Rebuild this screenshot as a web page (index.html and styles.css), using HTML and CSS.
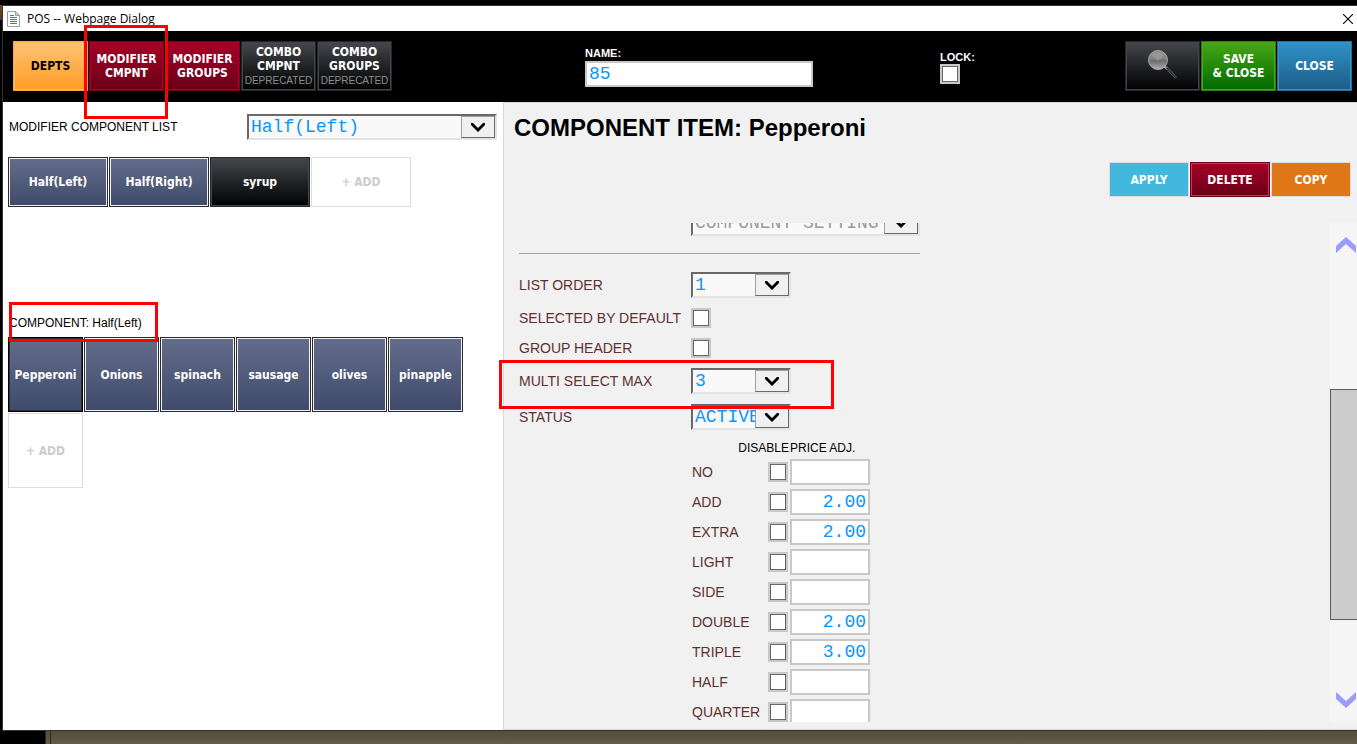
FILE: index.html
```html
<!DOCTYPE html>
<html lang="en">
<head>
    <meta charset="UTF-8">
    <title>POS -- Webpage Dialog</title>
    <link rel="stylesheet" href="styles.css">
</head>
<body>

<div class="dialog">
    <div class="titlebar">
        <svg class="doc-icon" width="13" height="16" viewBox="0 0 13 16">
            <path d="M.5.5h8l4 4v11H.5z" fill="#fff" stroke="#9a9fa3"/>
            <path d="M8.500 .5v4h4z" fill="#d5d8da" stroke="#9a9fa3"/>
            <path d="M3 4.500h4M3 6.500h7M3 8.500h7M3 10.500h7M3 12.500h7" stroke="#3a7ab8"/>
        </svg>
        <span>POS -- Webpage Dialog</span>
        <button class="close-x" aria-label="Close dialog">
            <svg width="10" height="10" viewBox="0 0 10 10"><path d="M0 0l10 10M10 0L0 10" stroke="#000" stroke-width="1.1"/></svg>
        </button>
    </div>

    <header class="toolbar">
        <nav class="btn-row">
            <button class="btn nav-btn orange">DEPTS</button>
            <button class="btn nav-btn red">MODIFIER<br>CMPNT</button>
            <button class="btn nav-btn red">MODIFIER<br>GROUPS</button>
            <button class="btn nav-btn dark">COMBO<br>CMPNT<br><span class="note">DEPRECATED</span></button>
            <button class="btn nav-btn dark">COMBO<br>GROUPS<br><span class="note">DEPRECATED</span></button>
        </nav>
        <div class="name-field">
            <label for="name">NAME:</label>
            <input type="text" id="name" class="text-input" value="85">
        </div>
        <div class="toolbar-end">
            <div class="lock-field">
                <label for="lock">LOCK:</label>
                <input type="checkbox" id="lock" class="check">
            </div>
            <div class="btn-row">
                <button class="btn nav-btn dark" aria-label="Search">
                    <svg width="32" height="32" viewBox="0 0 32 32">
                        <defs>
                            <linearGradient id="glass" x1="0" y1="0" x2="0" y2="1">
                                <stop offset="0" stop-color="#8a8a8a"/>
                                <stop offset=".4" stop-color="#858585"/>
                                <stop offset=".55" stop-color="#6c6c6c"/>
                                <stop offset="1" stop-color="#b0b0b0"/>
                            </linearGradient>
                        </defs>
                        <path d="M17 17l3 3" stroke="#b8b8b8" stroke-width="2"/>
                        <path d="M19 18l10 11" stroke="#777" stroke-width="2.600"/>
                        <path d="M20 19l9 10" stroke="#2a2426" stroke-width="1.200"/>
                        <circle cx="11" cy="11" r="9.500" fill="url(#glass)" stroke="#a8a8a8"/>
                        <path d="M4 6q7-6 14 0l-7 6z" fill="#a5a5a5" opacity=".5"/>
                    </svg>
                </button>
                <button class="btn nav-btn green">SAVE<br>&amp; CLOSE</button>
                <button class="btn nav-btn blue">CLOSE</button>
            </div>
        </div>
    </header>

    <main class="panels">
        <section class="list-panel">
            <div class="list-head">
                <label for="modList">MODIFIER COMPONENT LIST</label>
                <div class="dropdown wide">
                    <select id="modList">
                        <option>Half(Left)</option>
                        <option>Half(Right)</option>
                        <option>syrup</option>
                    </select>
                    <span class="arrow"><svg width="14" height="9" viewBox="0 0 14 9"><path d="M0 0h2l5 5 5-5h2v2L7 9 0 2z"/></svg></span>
                </div>
            </div>
            <div class="btn-row modifiers">
                <button class="btn mod-btn slate">Half(Left)</button>
                <button class="btn mod-btn slate">Half(Right)</button>
                <button class="btn mod-btn dark">syrup</button>
                <button class="btn mod-btn add">+ ADD</button>
            </div>
            <div class="component-label">COMPONENT: Half(Left)</div>
            <div class="btn-row">
                <button class="btn comp-btn slate selected">Pepperoni</button>
                <button class="btn comp-btn slate">Onions</button>
                <button class="btn comp-btn slate">spinach</button>
                <button class="btn comp-btn slate">sausage</button>
                <button class="btn comp-btn slate">olives</button>
                <button class="btn comp-btn slate">pinapple</button>
                <button class="btn comp-btn add">+ ADD</button>
            </div>
        </section>

        <section class="item-panel">
            <h1>COMPONENT ITEM: Pepperoni</h1>
            <div class="btn-row item-actions">
                <button class="btn act-btn cyan">APPLY</button>
                <button class="btn act-btn red delete">DELETE</button>
                <button class="btn act-btn copy">COPY</button>
            </div>

            <div class="scroll-area">
                <form class="settings">
                    <div class="field tall">
                        <span class="field-label"></span>
                        <div class="dropdown setting">
                            <select aria-label="Component setting" class="muted">
                                <option>COMPONENT SETTING</option>
                            </select>
                            <span class="arrow"><svg width="14" height="9" viewBox="0 0 14 9"><path d="M0 0h2l5 5 5-5h2v2L7 9 0 2z"/></svg></span>
                        </div>
                    </div>
                    <hr>
                    <div class="field tall">
                        <label class="field-label" for="listOrder">LIST ORDER</label>
                        <div class="dropdown">
                            <select id="listOrder"><option>1</option><option>2</option><option>3</option></select>
                            <span class="arrow"><svg width="14" height="9" viewBox="0 0 14 9"><path d="M0 0h2l5 5 5-5h2v2L7 9 0 2z"/></svg></span>
                        </div>
                    </div>
                    <div class="field">
                        <label class="field-label" for="byDefault">SELECTED BY DEFAULT</label>
                        <input type="checkbox" id="byDefault" class="check">
                    </div>
                    <div class="field">
                        <label class="field-label" for="groupHeader">GROUP HEADER</label>
                        <input type="checkbox" id="groupHeader" class="check">
                    </div>
                    <div class="field tall">
                        <label class="field-label" for="multiMax">MULTI SELECT MAX</label>
                        <div class="dropdown">
                            <select id="multiMax"><option>3</option><option>2</option><option>1</option></select>
                            <span class="arrow"><svg width="14" height="9" viewBox="0 0 14 9"><path d="M0 0h2l5 5 5-5h2v2L7 9 0 2z"/></svg></span>
                        </div>
                    </div>
                    <div class="field tall">
                        <label class="field-label" for="status">STATUS</label>
                        <div class="dropdown">
                            <select id="status"><option>ACTIVE</option><option>INACTIVE</option></select>
                            <span class="arrow"><svg width="14" height="9" viewBox="0 0 14 9"><path d="M0 0h2l5 5 5-5h2v2L7 9 0 2z"/></svg></span>
                        </div>
                    </div>

                    <table class="prices">
                        <thead>
                            <tr><th colspan="2" class="disable-col">DISABLE</th><th>PRICE ADJ.</th></tr>
                        </thead>
                        <tbody>
                            <tr>
                                <td><label for="pNo">NO</label></td>
                                <td><input type="checkbox" class="check" aria-label="Disable NO"></td>
                                <td><input type="text" id="pNo" class="text-input price"></td>
                            </tr>
                            <tr>
                                <td><label for="pAdd">ADD</label></td>
                                <td><input type="checkbox" class="check" aria-label="Disable ADD"></td>
                                <td><input type="text" id="pAdd" class="text-input price" value="2.00"></td>
                            </tr>
                            <tr>
                                <td><label for="pExtra">EXTRA</label></td>
                                <td><input type="checkbox" class="check" aria-label="Disable EXTRA"></td>
                                <td><input type="text" id="pExtra" class="text-input price" value="2.00"></td>
                            </tr>
                            <tr>
                                <td><label for="pLight">LIGHT</label></td>
                                <td><input type="checkbox" class="check" aria-label="Disable LIGHT"></td>
                                <td><input type="text" id="pLight" class="text-input price"></td>
                            </tr>
                            <tr>
                                <td><label for="pSide">SIDE</label></td>
                                <td><input type="checkbox" class="check" aria-label="Disable SIDE"></td>
                                <td><input type="text" id="pSide" class="text-input price"></td>
                            </tr>
                            <tr>
                                <td><label for="pDouble">DOUBLE</label></td>
                                <td><input type="checkbox" class="check" aria-label="Disable DOUBLE"></td>
                                <td><input type="text" id="pDouble" class="text-input price" value="2.00"></td>
                            </tr>
                            <tr>
                                <td><label for="pTriple">TRIPLE</label></td>
                                <td><input type="checkbox" class="check" aria-label="Disable TRIPLE"></td>
                                <td><input type="text" id="pTriple" class="text-input price" value="3.00"></td>
                            </tr>
                            <tr>
                                <td><label for="pHalf">HALF</label></td>
                                <td><input type="checkbox" class="check" aria-label="Disable HALF"></td>
                                <td><input type="text" id="pHalf" class="text-input price"></td>
                            </tr>
                            <tr>
                                <td><label for="pQuarter">QUARTER</label></td>
                                <td><input type="checkbox" class="check" aria-label="Disable QUARTER"></td>
                                <td><input type="text" id="pQuarter" class="text-input price"></td>
                            </tr>
                        </tbody>
                    </table>
                </form>

                <div class="scrollbar">
                    <button class="scroll-up" aria-label="Scroll up">
                        <svg width="20" height="16" viewBox="0 0 20 16"><path d="M0 9L10 0l10 9v7L10 7 0 16z" fill="#9c9cff"/></svg>
                    </button>
                    <div class="thumb"></div>
                    <button class="scroll-down" aria-label="Scroll down">
                        <svg width="20" height="16" viewBox="0 0 20 16"><path d="M0 7l10 9 10-9V0L10 9 0 0z" fill="#9c9cff"/></svg>
                    </button>
                </div>
            </div>
        </section>
    </main>
</div>

<div class="desktop-strip"></div>

<div class="mark mark-tab"></div>
<div class="mark mark-component"></div>
<div class="mark mark-multi"></div>

</body>
</html>
```

FILE: styles.css
```css
* {
    box-sizing: border-box;
}

body {
    margin: 0;
    height: 100vh;
    display: flex;
    flex-direction: column;
    position: relative;
    overflow: hidden;
    background: #000 linear-gradient(#6b4a1e, #5a3c16) 0 5px / 2px 15px no-repeat;
    font-family: "Liberation Sans", Arial, sans-serif;
    font-size: 12px;
    color: #000;
}

.dialog {
    flex: 1;
    min-height: 0;
    display: flex;
    flex-direction: column;
    margin: 5px 0 0 2px;
    border: 1px solid #333;
    border-right: none;
    background: #fff;
}

.desktop-strip {
    height: 13px;
    margin-left: 45px;
    border-left: 1px solid #2c281f;
    background: linear-gradient(#544d3d, #645b48);
}

.desktop-strip::before {
    content: "";
    display: block;
    width: 4px;
    height: 100%;
    border-right: 1px solid #2c281f;
}

/* title bar */
.titlebar {
    display: flex;
    align-items: center;
    height: 25px;
    padding: 0 4px;
    font-family: "Open Sans", "Segoe UI", sans-serif;
    font-size: 12px;
}

.doc-icon {
    margin-right: 7px;
}

.close-x {
    margin-left: auto;
    padding: 0;
    border: none;
    background: none;
    line-height: 0;
}

/* buttons */
.btn-row {
    display: flex;
    flex-wrap: wrap;
    gap: 1px;
}

.btn {
    padding: 0;
    border: 1px solid;
    color: #fff;
    font-family: "DejaVu Sans Condensed", Tahoma, "Noto Sans", sans-serif;
    font-size: 12px;
    font-weight: bold;
    line-height: 14px;
    cursor: pointer;
}

.nav-btn {
    width: 75px;
    height: 50px;
}

.mod-btn {
    width: 100px;
    height: 50px;
}

.comp-btn {
    width: 75px;
    height: 75px;
}

.act-btn {
    width: 80px;
    height: 35px;
}

.orange {
    color: #000;
    background: linear-gradient(#ffc277, #ff9c22);
    border-color: #f5a742;
    box-shadow: inset 0 0 0 1px #ffba63;
}

.red {
    background: linear-gradient(#a80028, #680016);
    border-color: #7d001c;
    box-shadow: inset 0 0 0 1px #a80028;
}

.dark {
    background: linear-gradient(#44474c, #000);
    border-color: #26272b;
    box-shadow: inset 0 0 0 1px #43454c;
}

.green {
    background: linear-gradient(#48a616, #006a00);
    border-color: #2f7f0c;
    box-shadow: inset 0 0 0 1px #4aa81a;
}

.blue {
    background: linear-gradient(#3092c8, #1d5c88);
    border-color: #22719d;
    box-shadow: inset 0 0 0 1px #3294ca;
}

.slate {
    background: linear-gradient(#646c8a, #3f4b6b);
    border-color: #2b2b2b;
    box-shadow: inset 0 0 0 1px #f0f0f0;
}

.slate.selected {
    border-color: #000;
    box-shadow: inset 0 0 0 1px #2c3039;
}

.add {
    color: #ccc;
    background: #fff;
    border-color: #ddd;
}

.cyan {
    background: #42b8df;
    border-color: #ddd;
}

.delete {
    border-color: #6c0018;
    box-shadow: inset 0 0 0 1px #c43a50;
}

.copy {
    background: #e07716;
    border-color: #ddd;
}

.note {
    color: #8c8c8c;
    font-family: "Liberation Sans", Arial, sans-serif;
    font-size: 10px;
    font-weight: normal;
}

/* form controls */
.text-input {
    height: 26px;
    padding: 0 2px;
    border: 2px solid #c8c8c8;
    background: #fff;
    color: #0a95ff;
    font-family: "Liberation Mono", "Courier New", monospace;
    font-size: 18px;
}

.check {
    appearance: none;
    display: block;
    width: 20px;
    height: 20px;
    margin: 0;
    border: 2px solid #c8c8c8;
    background: #fff;
    box-shadow: inset 0 0 0 1px #666;
}

.dropdown {
    display: flex;
    width: 100px;
    height: 26px;
    border: 2px solid;
    border-color: #696969 #e3e3e3 #e3e3e3 #696969;
    background: #f9f9f9;
}

.dropdown.wide {
    width: 250px;
}

.dropdown.setting {
    width: 229px;
}

.dropdown select {
    flex: 1;
    min-width: 0;
    appearance: none;
    padding: 0 0 0 2px;
    border: none;
    border-radius: 0;
    background: none;
    color: #0a95ff;
    font-family: "Liberation Mono", "Courier New", monospace;
    font-size: 18px;
    line-height: 22px;
}

.dropdown select.muted {
    color: #999;
}

.arrow {
    display: flex;
    align-items: center;
    justify-content: center;
    width: 34px;
    border: 1px solid;
    border-color: #a0a0a0 #696969 #696969 #a0a0a0;
    background: #f0f0f0;
}

/* top toolbar */
.toolbar {
    display: grid;
    grid-template-columns: 582fr 355fr 417fr;
    height: 71px;
    padding: 10px 0;
    background: #000;
    color: #fff;
}

.toolbar nav {
    padding-left: 10px;
}

.toolbar label {
    display: block;
    font-size: 11px;
    font-weight: bold;
    line-height: 14px;
}

.name-field {
    padding-top: 5px;
}

.name-field .text-input {
    display: block;
    width: 228px;
    margin-top: 1px;
}

.toolbar-end {
    display: flex;
    justify-content: space-between;
    padding-right: 5px;
}

.lock-field {
    padding-top: 9px;
}

/* left panel */
.panels {
    flex: 1;
    min-height: 0;
    display: grid;
    grid-template-columns: 500fr 854fr;
}

.list-panel {
    padding: 12px 5px;
}

.list-head {
    display: flex;
    align-items: center;
    justify-content: space-between;
    margin-bottom: 17px;
    padding: 0 1px;
}

.modifiers {
    align-content: flex-start;
    min-height: 158px;
}

.component-label {
    padding-left: 1px;
    margin-bottom: 6px;
    line-height: 16px;
}

/* right panel */
.item-panel {
    min-height: 0;
    display: flex;
    flex-direction: column;
    padding-bottom: 7px;
    border: 1px solid #d8d8d8;
    border-right: none;
    background: #f1f1f1;
}

.item-panel h1 {
    margin: 11px 10px 20px;
    font-size: 24px;
    line-height: 28px;
}

.item-actions {
    justify-content: flex-end;
    margin-bottom: 26px;
    padding-right: 6px;
}

.scroll-area {
    flex: 1;
    min-height: 0;
    display: flex;
    justify-content: space-between;
    overflow: hidden;
}

/* scrolled so the first row is half hidden */
.settings {
    margin-top: -18px;
    padding-left: 15px;
    color: #5f3030;
    font-size: 14px;
}

.settings hr {
    width: 401px;
    margin: 12px 0 13px;
    border: none;
    border-top: 1px solid #a0a0a0;
}

.field {
    display: flex;
    align-items: center;
    height: 30px;
}

.field.tall {
    height: 36px;
}

.field-label {
    width: 172px;
}

.prices {
    margin-left: 172px;
    border-collapse: collapse;
}

.prices th {
    height: 22px;
    padding: 4px 0 0;
    color: #000;
    font-size: 12px;
    font-weight: normal;
    text-align: left;
}

.prices th.disable-col {
    padding-right: 1px;
    text-align: right;
}

.prices td {
    height: 30px;
    padding: 0;
}

.prices td:first-child {
    width: 77px;
    padding-left: 1px;
}

.prices td:nth-child(2) {
    width: 22px;
}

.price {
    display: block;
    width: 80px;
    text-align: right;
}

.scrollbar {
    display: grid;
    grid-template-rows: 166fr 231fr 102fr;
    width: 27px;
    background: #f5f5f5;
}

.scrollbar button {
    display: flex;
    justify-content: center;
    padding: 14px 0 14px 5px;
    border: none;
    background: none;
}

.scroll-up {
    align-items: flex-start;
}

.thumb {
    border: 1px solid #5c5c5c;
    border-right: none;
    background: #cdcdcd;
}

.scroll-down {
    align-items: flex-end;
}

/* red highlight boxes over the page */
.mark {
    position: absolute;
    border: 3px solid #f00;
    pointer-events: none;
}

.mark-tab {
    left: 84px;
    top: 25px;
    width: 84px;
    height: 94px;
}

.mark-component {
    left: 9px;
    top: 302px;
    width: 149px;
    height: 40px;
}

.mark-multi {
    left: 499px;
    top: 360px;
    width: 335px;
    height: 49px;
}
```
